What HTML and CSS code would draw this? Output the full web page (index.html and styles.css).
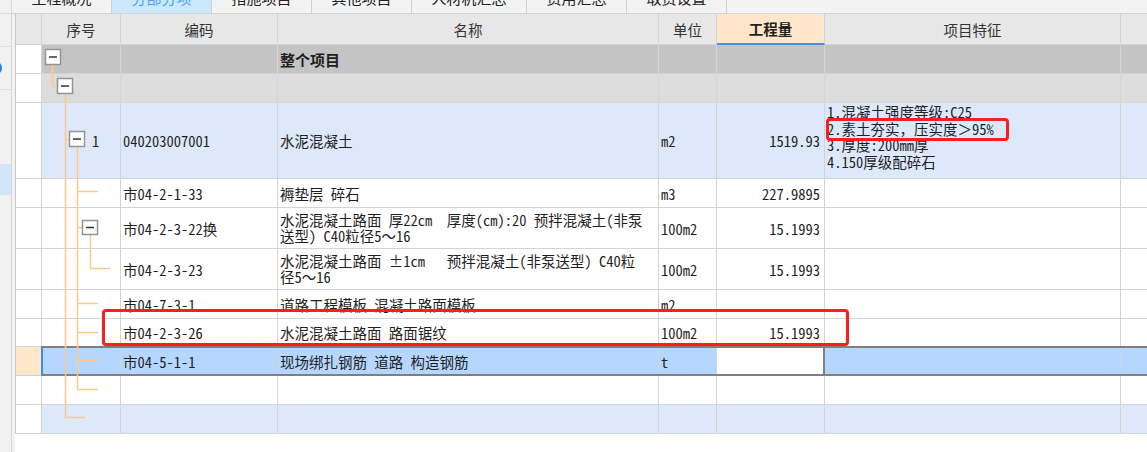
FILE: index.html
```html
<!DOCTYPE html>
<html lang="zh-CN">
<head>
<meta charset="utf-8">
<title>分部分项</title>
<link rel="stylesheet" href="styles.css">
</head>
<body>
<div class="app">
  <aside class="side">
    <div class="side-sec s1"></div>
    <div class="side-sec s2"></div>
    <div class="side-sec s3"><span class="dot"></span></div>
    <div class="s-gap"></div>
    <div class="s-active"></div>
  </aside>
  <main class="main">
    <nav class="tabs">
      <div class="tab"><span>工程概况</span></div>
      <div class="tab active"><span>分部分项</span></div>
      <div class="tab"><span>措施项目</span></div>
      <div class="tab"><span>其他项目</span></div>
      <div class="tab wide"><span>人材机汇总</span></div>
      <div class="tab"><span>费用汇总</span></div>
      <div class="tab"><span>取费设置</span></div>
    </nav>
    <div class="content">
      <div class="grid">
        <div class="row head">
          <div class="c"></div>
          <div class="c">序号</div>
          <div class="c">编码</div>
          <div class="c">名称</div>
          <div class="c">单位</div>
          <div class="c qty">工程量</div>
          <div class="c">项目特征</div>
          <div class="c"></div>
        </div>

        <div class="row h29 g1">
          <div class="c idx"></div>
          <div class="c"></div>
          <div class="c"></div>
          <div class="c bold">整个项目</div>
          <div class="c"></div>
          <div class="c"></div>
          <div class="c"></div>
          <div class="c"></div>
        </div>

        <div class="row h29 g2">
          <div class="c idx"></div>
          <div class="c"></div>
          <div class="c"></div>
          <div class="c"></div>
          <div class="c"></div>
          <div class="c"></div>
          <div class="c"></div>
          <div class="c"></div>
        </div>

        <div class="row h76 blue">
          <div class="c idx"></div>
          <div class="c seq">1</div>
          <div class="c">040203007001</div>
          <div class="c">水泥混凝土</div>
          <div class="c">m2</div>
          <div class="c num">1519.93</div>
          <div class="c feat">
            <div>1.混凝土强度等级:C25</div>
            <div>2.素土夯实，压实度＞95%</div>
            <div>3.厚度:200mm厚</div>
            <div>4.150厚级配碎石</div>
          </div>
          <div class="c"></div>
        </div>

        <div class="row h29">
          <div class="c idx"></div>
          <div class="c"></div>
          <div class="c">市04-2-1-33</div>
          <div class="c">褥垫层 碎石</div>
          <div class="c">m3</div>
          <div class="c num">227.9895</div>
          <div class="c"></div>
          <div class="c"></div>
        </div>

        <div class="row h41">
          <div class="c idx"></div>
          <div class="c"></div>
          <div class="c">市04-2-3-22换</div>
          <div class="c wrap"><span>水泥混凝土路面 厚22cm&nbsp; 厚度(cm):20 预拌混凝土(非泵<br>送型) C40粒径5～16</span></div>
          <div class="c">100m2</div>
          <div class="c num">15.1993</div>
          <div class="c"></div>
          <div class="c"></div>
        </div>

        <div class="row h41">
          <div class="c idx"></div>
          <div class="c"></div>
          <div class="c">市04-2-3-23</div>
          <div class="c wrap"><span>水泥混凝土路面 ±1cm&nbsp;&nbsp; 预拌混凝土(非泵送型) C40粒<br>径5～16</span></div>
          <div class="c">100m2</div>
          <div class="c num">15.1993</div>
          <div class="c"></div>
          <div class="c"></div>
        </div>

        <div class="row h29">
          <div class="c idx"></div>
          <div class="c"></div>
          <div class="c">市04-7-3-1</div>
          <div class="c">道路工程模板 混凝土路面模板</div>
          <div class="c">m2</div>
          <div class="c num"></div>
          <div class="c"></div>
          <div class="c"></div>
        </div>

        <div class="row h28">
          <div class="c idx"></div>
          <div class="c"></div>
          <div class="c">市04-2-3-26</div>
          <div class="c">水泥混凝土路面 路面锯纹</div>
          <div class="c">100m2</div>
          <div class="c num">15.1993</div>
          <div class="c"></div>
          <div class="c"></div>
        </div>

        <div class="row h29 sel">
          <div class="c idx"></div>
          <div class="c"></div>
          <div class="c">市04-5-1-1</div>
          <div class="c">现场绑扎钢筋 道路 构造钢筋</div>
          <div class="c">t</div>
          <div class="c num edit"></div>
          <div class="c"></div>
          <div class="c"></div>
        </div>

        <div class="row h29">
          <div class="c idx"></div>
          <div class="c"></div>
          <div class="c"></div>
          <div class="c"></div>
          <div class="c"></div>
          <div class="c"></div>
          <div class="c"></div>
          <div class="c"></div>
        </div>

        <div class="row h29 blue">
          <div class="c idx"></div>
          <div class="c"></div>
          <div class="c"></div>
          <div class="c"></div>
          <div class="c"></div>
          <div class="c"></div>
          <div class="c"></div>
          <div class="c"></div>
        </div>

        <div class="sel-frame"></div>

        <svg class="tree" width="79" height="390" viewBox="0 0 79 390" xmlns="http://www.w3.org/2000/svg">
          <g transform="translate(-41,-44)" fill="none">
            <g stroke="#fcc98b" stroke-width="1.5">
              <path d="M52.5 65 V86.5 H57"/>
              <path d="M65.5 94 V417.5 H85"/>
              <path d="M65.5 139.5 H69"/>
              <path d="M77.5 147 V389.5"/>
              <path d="M77.5 191.5 H98 M77.5 303.5 H98 M77.5 332.5 H98 M77.5 360.5 H98 M77.5 389.5 H98"/>
              <path d="M77.5 227.5 H82"/>
              <path d="M90.5 234 V268.5 H110"/>
            </g>
            <g stroke="#949494" stroke-width="1.5" fill="#fff">
              <rect x="45.5" y="49.5" width="15" height="15"/>
              <rect x="57.5" y="78.5" width="15" height="15"/>
              <rect x="69.5" y="131.5" width="15" height="15"/>
              <rect x="82.5" y="220.5" width="15" height="14"/>
            </g>
            <g stroke="#333" stroke-width="1.5">
              <path d="M49 57 H57"/>
              <path d="M61 86 H69"/>
              <path d="M73 139 H81"/>
              <path d="M86 227.5 H94"/>
            </g>
          </g>
        </svg>

        <div class="mark mark1"></div>
        <div class="mark mark2"></div>
      </div>
    </div>
  </main>
</div>
</body>
</html>
```
FILE: styles.css
```css
* { box-sizing: border-box; }
html, body { margin: 0; padding: 0; background: #fff; }
body {
  width: 1147px;
  height: 452px;
  overflow: hidden;
  font-family: "Noto Sans CJK SC", "Noto Sans", sans-serif;
  color: #1f1f1f;
}
.app { display: flex; height: 452px; }

/* left strip */
.side {
  width: 12px;
  flex: none;
  background: #f1f1f1;
  border-right: 1px solid #d9d9d9;
  display: flex;
  flex-direction: column;
}
.side-sec { border-bottom: 1px solid #dedede; overflow: hidden; flex: none; }
.s1 { height: 14px; }
.s2 { height: 33px; }
.s3 { height: 43px; display: flex; align-items: center; }
.dot {
  width: 14px; height: 14px; border-radius: 50%;
  background: #1b84e6; margin-left: -12px; flex: none;
}
.s-gap { height: 74px; flex: none; }
.s-active { height: 31px; background: #cfe6fa; flex: none; }

/* main */
.main { flex: 1; min-width: 0; display: flex; flex-direction: column; overflow: hidden; }
.tabs {
  height: 14px; flex: none; display: flex;
  background: #f3f3f3; border-bottom: 1px solid #d4d4d4;
}
.tab {
  width: 100px; flex: none;
  border-right: 1px solid #d0d0d0;
  overflow: hidden; text-align: center;
  font-size: 15px; line-height: 18px; color: #222;
}
.tab span { display: block; margin-top: -11px; }
.tab.wide { width: 115px; }
.tab.active { background: #cce8ff; color: #4fa3ee; }

.content { flex: 1; border-left: 3px solid #f1f1f1; background: #fff; overflow: hidden; }
.grid { position: relative; border-left: 1px solid #c8c8c8; width: 1200px; }

.row {
  display: grid;
  grid-template-columns: 26px 79px 157px 381px 58px 108px 296px 80px;
}
.c {
  border-right: 1px solid #d4d4d4;
  border-bottom: 1px solid #d4d4d4;
  display: flex; align-items: center;
  padding: 0 2px;
  overflow: hidden; white-space: nowrap;
  font-family: "Noto Sans Mono CJK SC", "Noto Sans CJK SC", monospace;
  font-size: 14.5px;
  color: #1f1f1f;
}

.head { height: 31px; }
.head .c {
  background: #e7e7e7; justify-content: center;
  font-family: "Noto Sans CJK SC", sans-serif;
  font-size: 14.5px; color: #333;
}
.head .qty {
  background: #fde6c9; font-weight: bold; color: #222;
  border-bottom: 2px solid #4a90e2;
}

.h28 { height: 28px; }
.h29 { height: 29px; }
.h41 { height: 41px; }
.h76 { height: 76px; }

.g1 .c { background: #c4c4c4; }
.g2 .c { background: #dcdcdc; }
.blue .c { background: #dde9fb; }
.sel .c { background: #b5d7ff; }
.row .idx { background: #fff; }
.sel .idx { background: #ffe7cb; }
.sel .edit { background: #fff; border-right: 2px solid #7f7f7f; }

.bold { font-family: "Noto Sans CJK SC", sans-serif; font-weight: bold; font-size: 15px; }
.seq { padding-left: 50px; }
.num { justify-content: flex-end; padding-right: 4px; }
.wrap { white-space: normal; line-height: 16px; }
.feat {
  flex-direction: column; align-items: flex-start; justify-content: flex-start;
  padding-top: 1px; line-height: 16.5px;
}

.sel-frame {
  position: absolute; left: 25px; top: 332px; right: 0; height: 30px;
  border-top: 2px solid #7f7f7f;
  border-bottom: 2px solid #7f7f7f;
  border-left: 2px solid #3a8ee6;
}
.tree { position: absolute; left: 25px; top: 30px; pointer-events: none; }

.mark { position: absolute; border: 3px solid #fa1e1e; border-radius: 4px; }
.mark1 { left: 810px; top: 104px; width: 183px; height: 23px; }
.mark2 { left: 86px; top: 295px; width: 747px; height: 37px; }
```
